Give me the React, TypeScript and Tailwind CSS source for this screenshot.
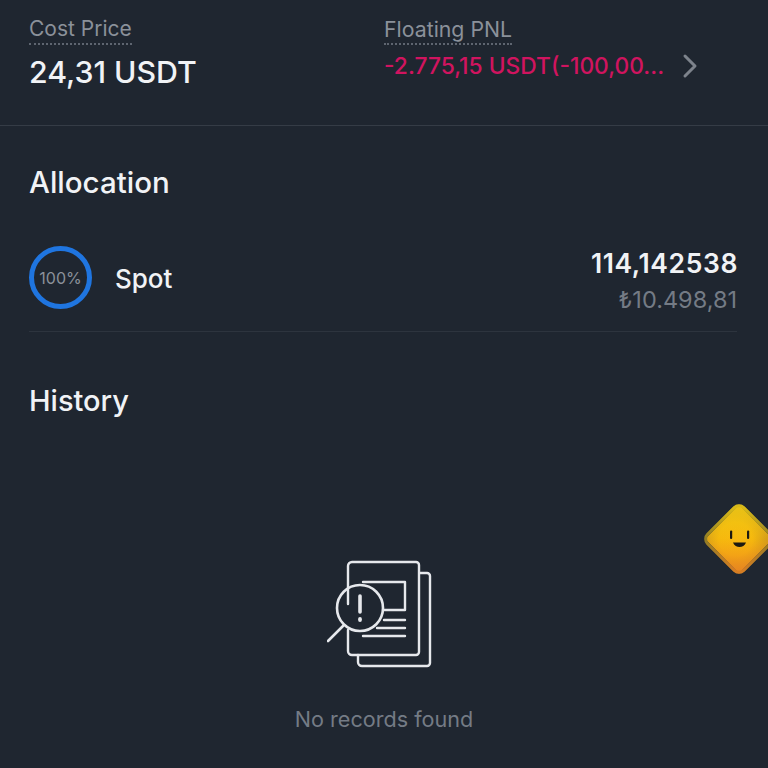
import React from 'react';

const font = { fontFamily: '"Inter", "Liberation Sans", sans-serif' };

const EmptyIcon: React.FC = () => (
  <svg width="106" height="108" viewBox="0 0 106 108" fill="none" stroke="#e6e8ec" strokeWidth="2.4" strokeLinecap="round" strokeLinejoin="round">
    {/* back sheet */}
    <path d="M93 13h7a3 3 0 0 1 3 3v87a3 3 0 0 1-3 3H35a4 4 0 0 1-4-4v-7" />
    {/* front sheet */}
    <path d="M21 44V6a4 4 0 0 1 4-4h64a3 3 0 0 1 3 3v87a3 3 0 0 1-3 3H25a4 4 0 0 1-4-4V70" />
    <path d="M36 22h42v28H57" />
    <path d="M57 60h21M50 68h28M36 76h42" />
    {/* magnifier */}
    <circle cx="33" cy="48" r="23" strokeWidth="2.6" />
    <path d="M16 66 1 81" strokeWidth="2.6" />
    <path d="M33 36v16" strokeWidth="3.6" />
    <path d="M33 59v1" strokeWidth="3.8" />
  </svg>
);

const Mascot: React.FC = () => (
  <div className="absolute left-[703px] top-[503px] w-[72px] h-[72px]">
    <div className="absolute left-[9px] top-[9px] w-[54px] h-[54px] rotate-45 rounded-[8px] border-[3px] border-[#8f7c25] bg-[radial-gradient(circle_at_45%_55%,#f8b90f_0%,#f5b80e_45%,#c9941e_100%)]" />
    <div className="absolute left-[9px] top-[9px] w-[54px] h-[54px] rotate-45 rounded-[8px] bg-[linear-gradient(135deg,rgba(240,205,20,0.75)_10%,rgba(245,185,15,0)_50%,rgba(240,125,35,0.85)_100%)]" />
    <svg className="absolute left-0 top-0" width="72" height="72" viewBox="0 0 72 72">
      <rect x="27" y="27.5" width="2.2" height="8.5" rx="1" fill="#1d1a12" />
      <rect x="44" y="27.5" width="2.2" height="8.5" rx="1" fill="#1d1a12" />
      <path d="M30 39.5h13c-1 3.200-4 4.500-6.500 4.500s-5.500-1.300-6.500-4.500z" fill="#1d1a12" />
    </svg>
  </div>
);

export default function App() {
  return (
    <div className="relative w-[768px] h-[768px] overflow-hidden bg-[#1f2630]" style={font}>
      {/* Price stats */}
      <div className="flex h-[126px] border-b border-[#353c46] pl-[29px] pt-[16px]">
        <div className="w-[355px]">
          <span className="inline-block border-b-2 border-dotted border-[#5e6570] text-[21px] leading-[26px] pb-[1px] text-[#8b919a]">Cost Price</span>
          <div className="mt-[8px] text-[30.300px] leading-[38px] font-medium text-[#f1f3f6]">24,31 USDT</div>
        </div>
        <div>
          <span className="inline-block border-b-2 border-dotted border-[#5e6570] text-[21.300px] leading-[26px] pb-[1px] text-[#8b919a]">Floating PNL</span>
          <div className="flex items-center h-[42px]">
            <span className="w-[298px] text-[22.800px] font-medium text-[#d0145f] whitespace-nowrap">-2.775,15 USDT(-100,00...</span>
            <svg width="16" height="26" viewBox="0 0 16 26" fill="none" stroke="#7d838c" strokeWidth="3" strokeLinecap="round" strokeLinejoin="round">
              <path d="M3 3l10 10L3 23" />
            </svg>
          </div>
        </div>
      </div>

      {/* Allocation */}
      <div className="pl-[29px] pr-[30px]">
        <h2 className="mt-[37px] text-[29.500px] leading-[38px] font-medium text-[#f1f3f6]">Allocation</h2>
        <div className="flex items-center justify-between mt-[45px] h-[63px]">
          <div className="flex items-center gap-[23px]">
            <div className="flex items-center justify-center w-[63px] h-[63px] rounded-full border-[5px] border-[#1f75e0] text-[16px] text-[#8b919a]">100%</div>
            <span className="pt-[2px] text-[26px] font-medium text-[#f1f3f6]">Spot</span>
          </div>
          <div className="text-right pt-[4px]">
            <div className="text-[26.500px] leading-[34px] font-semibold tracking-[0.6px] text-[#f1f3f6]">114,142538</div>
            <div className="mt-[6px] pr-[1px] text-[23.500px] leading-[28px] text-[#747b85]">₺10.498,81</div>
          </div>
        </div>
        <div className="mt-[22px] mr-[1px] border-b border-[#2d343e]" />
        <h2 className="mt-[50px] text-[29px] leading-[38px] font-medium text-[#f1f3f6]">History</h2>
      </div>

      {/* Empty state */}
      <div className="flex flex-col items-center mt-[140px]">
        <div className="mr-[8px]"><EmptyIcon /></div>
        <p className="mt-[37px] text-[21.600px] leading-[28px] text-[#747b85]">No records found</p>
      </div>

      <Mascot />
    </div>
  );
}
